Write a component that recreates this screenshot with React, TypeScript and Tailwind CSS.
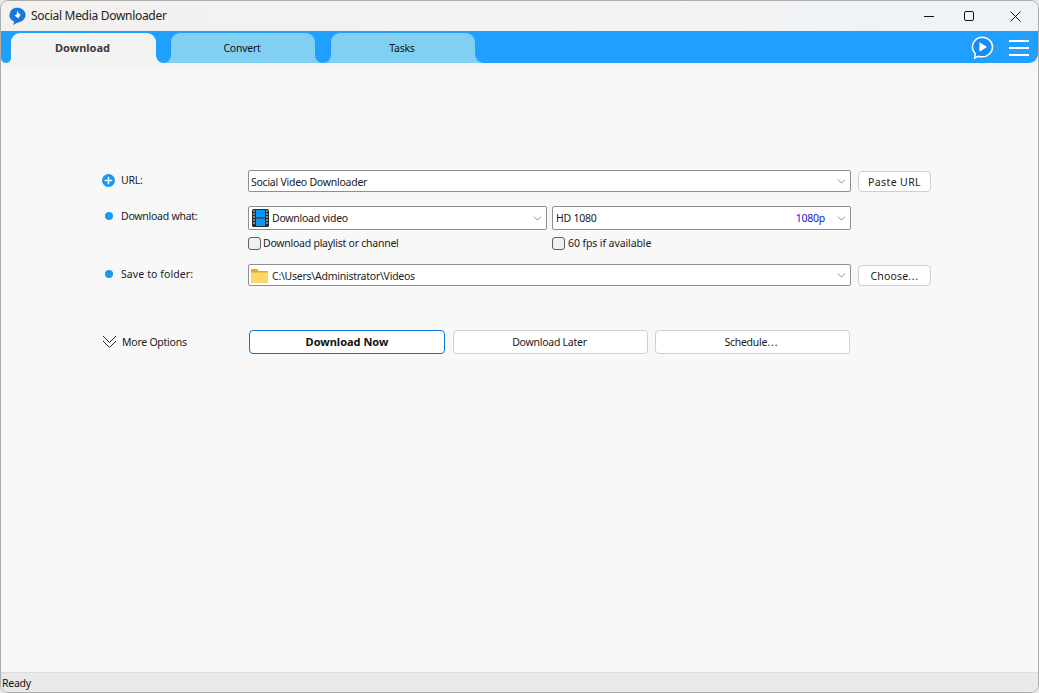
import { ChevronDown } from "lucide-react";

const font = "font-['Noto_Sans','Liberation_Sans',sans-serif]";

const Arrow = () => <ChevronDown className="w-[13px] h-[13px] text-[#555]" strokeWidth={1.2} />;

const Dot = () => (
  <div className="w-[19px] h-[16px] mt-[2px] flex items-center justify-center pr-[6px]">
    <div className="w-2 h-2 rounded-full bg-[#1797f5]" />
  </div>
);

const Combo = ({ className, children }: { className: string; children: React.ReactNode }) => (
  <div className={`flex items-center bg-white border border-[#8f8f8f] rounded-[2px] pr-[2px] ${className}`}>
    <div className="flex-1 flex items-center min-w-0">{children}</div>
    <Arrow />
  </div>
);

const Check = ({ label, className }: { label: string; className: string }) => (
  <div className={`flex items-center ${className}`}>
    <div className="w-[13px] h-[13px] rounded-[3px] border border-[#5f5f5f] bg-[#f1f1f1]" />
    <span>{label}</span>
  </div>
);

const Btn = ({ className, children }: { className: string; children: React.ReactNode }) => (
  <div className={`flex items-center justify-center bg-white border rounded-[4px] ${className}`}>{children}</div>
);

const Gap = ({ left, right, className }: { left: string; right: string; className: string }) => (
  <div className={`${left} ${className}`}>
    <div className={`h-full w-1/2 float-right ${right}`} />
    <div className="relative h-full bg-[#219fff] rounded-b-[9px]" />
  </div>
);

const Tab = ({ label, active }: { label: string; active?: boolean }) => (
  <div
    className={`h-[30px] mt-[2px] pr-[2px] flex items-center justify-center rounded-t-[9px] ${
      active
        ? "w-[145px] bg-[#f3f3f3] text-[11px] tracking-normal font-bold text-[#3b3b3b]"
        : "w-[144px] pt-[2px] bg-[#81d0f2] text-[#111]"
    }`}
  >
    {label}
  </div>
);

export default function App() {
  return (
    <div className={`w-[1039px] h-[693px] bg-[#e9e9e9] ${font} text-[10.5px] tracking-[-0.25px] text-[#1a1a1a]`}>
      <div className="w-full h-full flex flex-col border border-[#adadad] rounded-[8px] overflow-hidden">
        {/* title bar */}
        <div className="h-[30px] flex items-center bg-gradient-to-r from-[#f3f1ee] to-[#eff3f7]">
          <svg className="ml-[8px] w-[17px] h-[18px]" viewBox="0 0 17 18">
            <path d="M8.500 1a7.500 7 0 0 1 1.500 13.900c-2 .3-3.500 1.500-5.500 2.600.6-1 1-2 .8-3.100A7.500 7 0 0 1 8.500 1z" fill="#1678de" stroke="#0d5fb8" strokeWidth="0.5" />
            <path d="M8.500 3.500l1.700 3.700 1.800-.4-2.700 4.700-3.800-3.300 2-.4z" fill="#fff" />
          </svg>
          <span className="ml-[5px] text-[12px] tracking-[-0.3px] text-[#222]">Social Media Downloader</span>
          <div className="ml-auto flex items-center">
            <div className="w-[10px] h-px bg-[#111] mr-[30px]" />
            <div className="w-[10px] h-[10px] border border-[#111] rounded-[2px] mr-[36px]" />
            <svg className="w-[11px] h-[11px] mr-[17px]" viewBox="0 0 11 11" stroke="#111" strokeWidth="1">
              <path d="M.5.5l10 10M10.500.5l-10 10" />
            </svg>
          </div>
        </div>

        {/* tab bar */}
        <div className="h-[32px] flex bg-[#219fff] shrink-0">
          <Gap left="bg-[#f3f3f3]" right="bg-[#f3f3f3]" className="w-[10px] bg-[#219fff]" />
          <Tab label="Download" active />
          <Gap left="bg-[#f3f3f3]" right="bg-[#81d0f2]" className="w-[15px]" />
          <Tab label="Convert" />
          <Gap left="bg-[#81d0f2]" right="bg-[#81d0f2]" className="w-[16px]" />
          <Tab label="Tasks" />
          <Gap left="bg-[#81d0f2]" right="bg-[#f3f3f3]" className="flex-1" />
        </div>

        {/* main */}
        <div className="relative flex-1 bg-[#f8f8f8] pt-[107px] pl-[101px] bg-gradient-to-b from-[#f3f3f3] to-[#f8f8f8] bg-[length:100%_12px] bg-no-repeat">
          {/* header icons sit over the tab bar */}
          <div className="absolute top-[-27px] right-[9px] flex items-center gap-[15px]">
            <svg className="w-[24px] h-[23px]" viewBox="0 0 24 23">
              <path d="M12 1.200a10.500 9.800 0 0 1 0 19.600c-1.300 0-2.500-.2-3.600-.6L4.700 22l.6-4.200A9.800 9.800 0 0 1 12 1.200z" fill="#1a8cf0" stroke="#fff" strokeWidth="1.500" />
              <path d="M9.500 6.200l7.500 4.800-7.500 4.800z" fill="#fff" />
            </svg>
            <div className="flex flex-col gap-[5px]">
              <div className="w-[20px] h-[2px] bg-white" />
              <div className="w-[20px] h-[2px] bg-white" />
              <div className="w-[20px] h-[2px] bg-white" />
            </div>
          </div>

          {/* url row */}
          <div className="flex h-[23px]">
            <div className="w-[146px] flex items-start">
              <svg className="w-[13px] h-[13px] mt-[4px] mr-[6px]" viewBox="0 0 14 14">
                <circle cx="7" cy="7" r="7" fill="#1797f5" />
                <path d="M7 3v8M3 7h8" stroke="#fff" strokeWidth="1.600" />
              </svg>
              <span className="leading-[16px] mt-[2px]">URL:</span>
            </div>
            <Combo className="w-[603px] h-[22px] pl-[2px]">
              <span className="pt-[3px]">Social Video Downloader</span>
            </Combo>
            <Btn className="w-[73px] h-[21px] ml-[7px] mt-[1px] pt-[2px] border-[#cfcfcf] tracking-[0.4px]">Paste URL</Btn>
          </div>

          {/* download what */}
          <div className="flex mt-[13px] h-[24px]">
            <div className="w-[146px] flex items-start">
              <Dot />
              <span className="leading-[16px] mt-[2px]">Download what:</span>
            </div>
            <Combo className="w-[299px] h-[24px] pl-[3px]">
              <svg className="w-[17px] h-[18px] mr-[3px]" viewBox="0 0 17 18">
                <rect width="17" height="18" rx="1.500" fill="#2b2b2b" />
                <rect x="4" y="1" width="9" height="7.500" fill="#0a96f2" />
                <rect x="4" y="9.500" width="9" height="7.500" fill="#0a96f2" />
                <path d="M1 2h2M1 5h2M1 8h2M1 11h2M1 14h2M14 2h2M14 5h2M14 8h2M14 11h2M14 14h2" stroke="#ddd" strokeWidth="1.200" />
              </svg>
              <span className="pt-[2px]">Download video</span>
            </Combo>
            <Combo className="w-[299px] h-[24px] ml-[5px] pl-[3px]">
              <span className="pt-[2px]">HD 1080</span>
              <span className="ml-auto mr-[10px] pt-[2px] text-[#1414d8]">1080p</span>
            </Combo>
          </div>

          {/* checkboxes */}
          <div className="flex mt-[6px] h-[15px] pl-[146px]">
            <Check label="Download playlist or channel" className="w-[304px] gap-[2px]" />
            <Check label="60 fps if available" className="gap-[3px] tracking-[-0.1px]" />
          </div>

          {/* save to folder */}
          <div className="flex mt-[13px] h-[23px]">
            <div className="w-[146px] flex items-start">
              <Dot />
              <span className="leading-[16px] mt-[2px] tracking-[0.1px]">Save to folder:</span>
            </div>
            <Combo className="w-[603px] h-[22px] pl-[2px]">
              <svg className="w-[17px] h-[15px] mr-[4px]" viewBox="0 0 17 15">
                <path d="M0 2a1 1 0 0 1 1-1h5l2 2h8a1 1 0 0 1 1 1v10a1 1 0 0 1-1 1H1a1 1 0 0 1-1-1z" fill="#e3ad1e" />
                <rect y="4.500" width="17" height="10.500" rx="1" fill="#fcd765" />
              </svg>
              <span className="pt-[3px]">C:\Users\Administrator\Videos</span>
            </Combo>
            <Btn className="w-[73px] h-[21px] ml-[7px] mt-[1px] pt-[2px] border-[#cfcfcf] tracking-[0.2px]">
              <span>
                Choose<span className="tracking-[0.6px]">...</span>
              </span>
            </Btn>
          </div>

          {/* actions */}
          <div className="flex mt-[43px] h-[24px] items-center">
            <div className="w-[147px] flex items-center">
              <svg className="w-[15px] h-[14px] mr-[5px]" viewBox="0 0 15 14" fill="none" stroke="#222" strokeWidth="1">
                <path d="M1 1l6.500 6.500L14 1M1 6l6.500 6.500L14 6" />
              </svg>
              <span className="pt-[2px]">More Options</span>
            </div>
            <Btn className="w-[196px] h-[24px] border-[#0a78d4] text-[11px] tracking-normal font-bold text-[#111]">Download Now</Btn>
            <Btn className="w-[195px] h-[24px] ml-[8px] pt-[2px] pr-[2px] border-[#cfcfcf]">Download Later</Btn>
            <Btn className="w-[195px] h-[24px] ml-[7px] pt-[2px] pr-[2px] border-[#cfcfcf]">
              <span>
                Schedule<span className="tracking-[1px]">...</span>
              </span>
            </Btn>
          </div>
        </div>

        {/* status bar */}
        <div className="h-[20px] shrink-0 flex items-center pl-[1px] pt-[3px] bg-[#e9e9e9] border-t border-[#dedede] text-[#111]">Ready</div>
      </div>
    </div>
  );
}
